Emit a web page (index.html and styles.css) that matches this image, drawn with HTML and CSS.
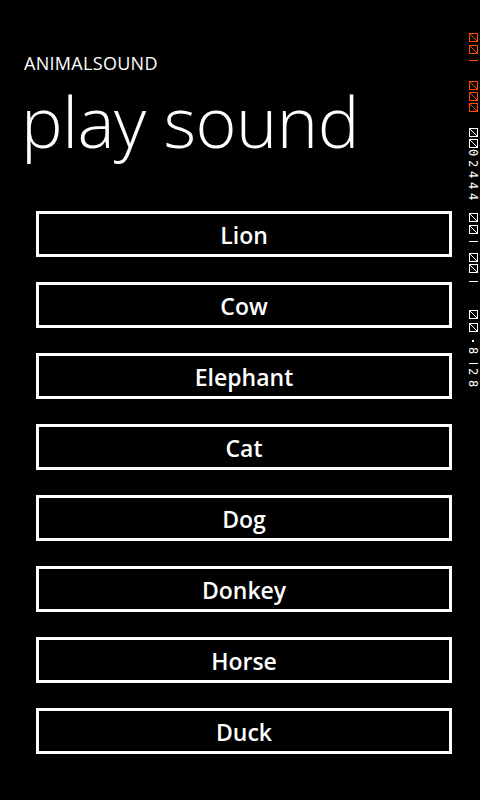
FILE: index.html
```html
<!DOCTYPE html>
<html>
<head>
<meta charset="utf-8">
<link rel="stylesheet" href="styles.css">
</head>
<body>
<div class="page">
  <header class="titles">
    <div class="app-name">ANIMALSOUND</div>
    <h1 class="page-title">play sound</h1>
  </header>
  <div class="buttons">
    <button class="btn">Lion</button>
    <button class="btn">Cow</button>
    <button class="btn">Elephant</button>
    <button class="btn">Cat</button>
    <button class="btn">Dog</button>
    <button class="btn">Donkey</button>
    <button class="btn">Horse</button>
    <button class="btn">Duck</button>
  </div>
  <div class="counter">
    <span class="box o"></span><span class="box o m3"></span><span class="dash o m6"></span>
    <span class="box o m20"></span><span class="box o m2"></span><span class="box o m2"></span>
    <span class="box m16"></span><span class="box m2"></span>
    <span class="dg">0</span><span class="dg">2</span><span class="dg">4</span><span class="dg">4</span><span class="dg">4</span>
    <span class="box m10"></span><span class="box m3"></span><span class="dash m7"></span>
    <span class="box m11"></span><span class="box m2"></span><span class="dash m8"></span>
    <span class="box m28"></span><span class="box m4"></span><span class="dot m8"></span>
    <span class="dg m5">8</span><span class="dash m6"></span><span class="dg m4">2</span><span class="dg m2">8</span>
  </div>
</div>
</body>
</html>
```

FILE: styles.css
```css
html, body {
  margin: 0;
  padding: 0;
  background: #000;
}
.page {
  position: relative;
  width: 480px;
  height: 800px;
  background: #000;
  color: #fff;
  font-family: "Open Sans", "Noto Sans", sans-serif;
  overflow: hidden;
}
.titles {
  padding: 54px 0 0 24px;
}
.app-name {
  font-size: 18px;
  font-weight: 400;
  line-height: 19px;
  height: 19px;
  letter-spacing: 0.3px;
}
.page-title {
  margin: 0 0 0 -3px;
  font-size: 70px;
  font-weight: 300;
  line-height: 96px;
  letter-spacing: -0.5px;
}
.buttons {
  display: flex;
  flex-direction: column;
  gap: 25px;
  padding: 42px 0 0 36px;
  width: 416px;
}
.btn {
  box-sizing: border-box;
  height: 46px;
  width: 416px;
  background: #000;
  border: 3px solid #fff;
  border-radius: 0;
  color: #fff;
  font-family: "Open Sans", "Noto Sans", sans-serif;
  font-size: 23px;
  font-weight: 600;
  padding: 2px 0 0;
  margin: 0;
}
.counter {
  position: absolute;
  top: 33px;
  left: 468px;
  width: 10px;
  display: flex;
  flex-direction: column;
  align-items: center;
}
.box {
  box-sizing: border-box;
  width: 9px;
  height: 9px;
  border: 1px solid #fff;
  background: linear-gradient(to bottom left, transparent 43%, #fff 43%, #fff 57%, transparent 57%);
}
.box.o {
  border-color: #ff4a00;
  background: linear-gradient(to bottom left, transparent 43%, #ff4a00 43%, #ff4a00 57%, transparent 57%);
}
.dash {
  width: 9px;
  height: 1px;
  background: #fff;
}
.dash.o { background: #ff4a00; }
.dot {
  width: 2px;
  height: 2px;
  background: #fff;
}
.dg {
  writing-mode: vertical-rl;
  font-family: "DejaVu Sans Mono", monospace;
  font-size: 12px;
  line-height: 10px;
  height: 10px;
  margin-top: 1px;
  color: #fff;
}
.m2 { margin-top: 2px; }
.m3 { margin-top: 3px; }
.m4 { margin-top: 4px; }
.m5 { margin-top: 5px; }
.m6 { margin-top: 6px; }
.m7 { margin-top: 7px; }
.m8 { margin-top: 8px; }
.m10 { margin-top: 10px; }
.m11 { margin-top: 11px; }
.m16 { margin-top: 16px; }
.m20 { margin-top: 20px; }
.m28 { margin-top: 28px; }
```
